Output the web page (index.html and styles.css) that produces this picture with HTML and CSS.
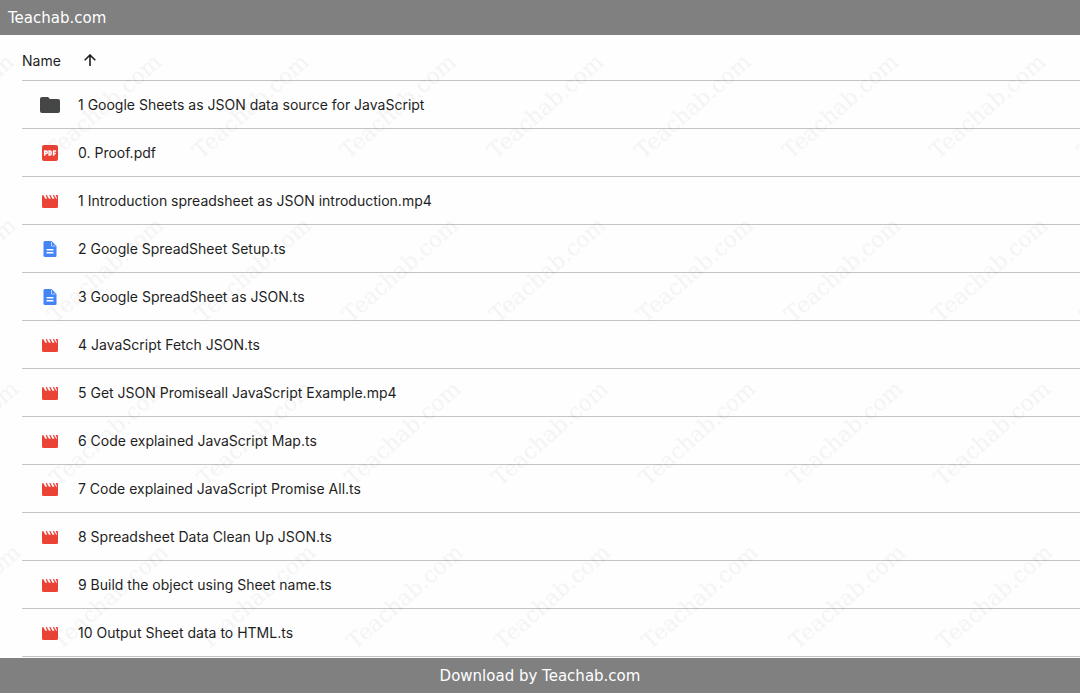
FILE: index.html
```html
<!DOCTYPE html>
<html lang="en">
<head>
<meta charset="utf-8">
<meta name="viewport" content="width=device-width, initial-scale=1">
<title>Teachab.com</title>
<link rel="stylesheet" href="styles.css">
</head>
<body>
<svg class="sprite" aria-hidden="true">
  <symbol id="folder" viewBox="0 0 20 16"><path d="M2 0h6l2 2h8q2 0 2 2v10q0 2-2 2H2q-2 0-2-2V2q0-2 2-2z"/></symbol>
  <symbol id="pdf" viewBox="0 0 16 16"><rect width="16" height="16" rx="2"/><path d="M2.700 10.700V6H4a1.200 1.200 0 0 1 0 2.600H2.700M7.100 6v4h.6q1.500 0 1.500-2t-1.500-2zM11.600 10.700V6h2.600M11.600 8.500h2.200" fill="none" stroke="#fff" stroke-width="1.500"/></symbol>
  <symbol id="video" viewBox="0 -1 16 14"><path d="M1.200 0l2.200 3.700h1.800L3.600 0h1.200l2.200 3.700h1.800L7.200 0h1.200l2.200 3.700h1.800L10.800 0h1.200l2.200 3.700h.9L13.700 0H15q1 0 1 1v10.500q0 1.500-1.500 1.500h-13Q0 13 0 11.500V1q0-1 1.200-1z"/></symbol>
  <symbol id="doc" viewBox="0 0 13 16"><path d="M1.500 0H8l5 5v9.500q0 1.500-1.500 1.500h-10Q0 16 0 14.500v-13Q0 0 1.500 0z"/><path d="M3 8.700h7M3 11.800h7" stroke="#fff" stroke-width="1.500"/><path d="M8 1v4h4" fill="none" stroke="#fff" stroke-width=".6"/></symbol>
</svg>
<header class="bar">Teachab.com</header>
<main class="files">
  <table class="list">
    <thead>
      <tr><th scope="col"><div class="heading">Name
        <button class="sort" type="button" aria-label="Reverse sort direction"><svg width="12" height="12" viewBox="0 0 12 12"><path d="M6 12V1M.7 6.300L6 1l5.300 5.300" fill="none" stroke="currentColor" stroke-width="1.600"/></svg></button></div></th></tr>
    </thead>
    <tbody>
      <tr><td><div class="file"><svg class="icon folder"><use href="#folder"/></svg>1 Google Sheets as JSON data source for JavaScript</div></td></tr>
      <tr><td><div class="file"><svg class="icon pdf"><use href="#pdf"/></svg>0. Proof.pdf</div></td></tr>
      <tr><td><div class="file"><svg class="icon video"><use href="#video"/></svg>1 Introduction spreadsheet as JSON introduction.mp4</div></td></tr>
      <tr><td><div class="file"><svg class="icon doc"><use href="#doc"/></svg>2 Google SpreadSheet Setup.ts</div></td></tr>
      <tr><td><div class="file"><svg class="icon doc"><use href="#doc"/></svg>3 Google SpreadSheet as JSON.ts</div></td></tr>
      <tr><td><div class="file"><svg class="icon video"><use href="#video"/></svg>4 JavaScript Fetch JSON.ts</div></td></tr>
      <tr><td><div class="file"><svg class="icon video"><use href="#video"/></svg>5 Get JSON Promiseall JavaScript Example.mp4</div></td></tr>
      <tr><td><div class="file"><svg class="icon video"><use href="#video"/></svg>6 Code explained JavaScript Map.ts</div></td></tr>
      <tr><td><div class="file"><svg class="icon video"><use href="#video"/></svg>7 Code explained JavaScript Promise All.ts</div></td></tr>
      <tr><td><div class="file"><svg class="icon video"><use href="#video"/></svg>8 Spreadsheet Data Clean Up JSON.ts</div></td></tr>
      <tr><td><div class="file"><svg class="icon video"><use href="#video"/></svg>9 Build the object using Sheet name.ts</div></td></tr>
      <tr><td><div class="file"><svg class="icon video"><use href="#video"/></svg>10 Output Sheet data to HTML.ts</div></td></tr>
    </tbody>
  </table>
  <svg class="watermark" aria-hidden="true">
    <defs>
      <pattern id="mark" x="32" y="9" width="147.400" height="163.500" patternUnits="userSpaceOnUse" patternTransform="skewX(0.8)">
        <text class="mark-text" transform="translate(20 116) rotate(-41)">Teachab.com</text>
      </pattern>
    </defs>
    <rect width="100%" height="100%" fill="url(#mark)"/>
  </svg>
</main>
<footer class="bar bottom">Download by Teachab.com</footer>
</body>
</html>
```

FILE: styles.css
```css
* {
  box-sizing: border-box;
}

body {
  margin: 0;
  height: 100vh;
  display: flex;
  flex-direction: column;
  background: #fefefe;
  color: #1f1f1f;
  font: 14px/20px Inter, "Liberation Sans", sans-serif;
}

.sprite {
  position: absolute;
  width: 0;
  height: 0;
}

.bar {
  flex: none;
  padding: 9px 8px 7px;
  background: #808080;
  color: #fff;
  font: 15px/19px "DejaVu Sans", sans-serif;
}

.bottom {
  text-align: center;
}

.files {
  position: relative;
  flex: 1;
  min-height: 0;
  overflow: hidden;
  padding-left: 22px;
}

.list {
  width: 100%;
  border-collapse: separate;
  border-spacing: 0;
}

.list th,
.list td {
  padding: 0;
  border-bottom: 1px solid #c4c4c4;
  font-weight: 400;
  text-align: left;
}

.heading {
  display: flex;
  align-items: center;
  gap: 23px;
  height: 45px;
  padding-top: 6px;
}

.sort {
  display: flex;
  padding: 0 0 2px;
  border: 0;
  background: none;
  color: #1f1f1f;
}

.file {
  display: flex;
  align-items: center;
  height: 47px;
  padding-left: 18px;
}

.icon {
  flex: none;
  margin: 0 20px 0 2px;
  width: 16px;
  height: 16px;
  fill: #ea4335;
}

.folder {
  margin: 0 18px 0 0;
  width: 20px;
  fill: #444746;
}

.video {
  height: 14px;
}

.doc {
  fill: #4285f4;
}

.watermark {
  position: absolute;
  inset: 0;
  width: 100%;
  height: 100%;
  pointer-events: none;
}

.mark-text {
  font: 22px "DejaVu Serif", serif;
  fill: #000;
  fill-opacity: 0.045;
}
```
